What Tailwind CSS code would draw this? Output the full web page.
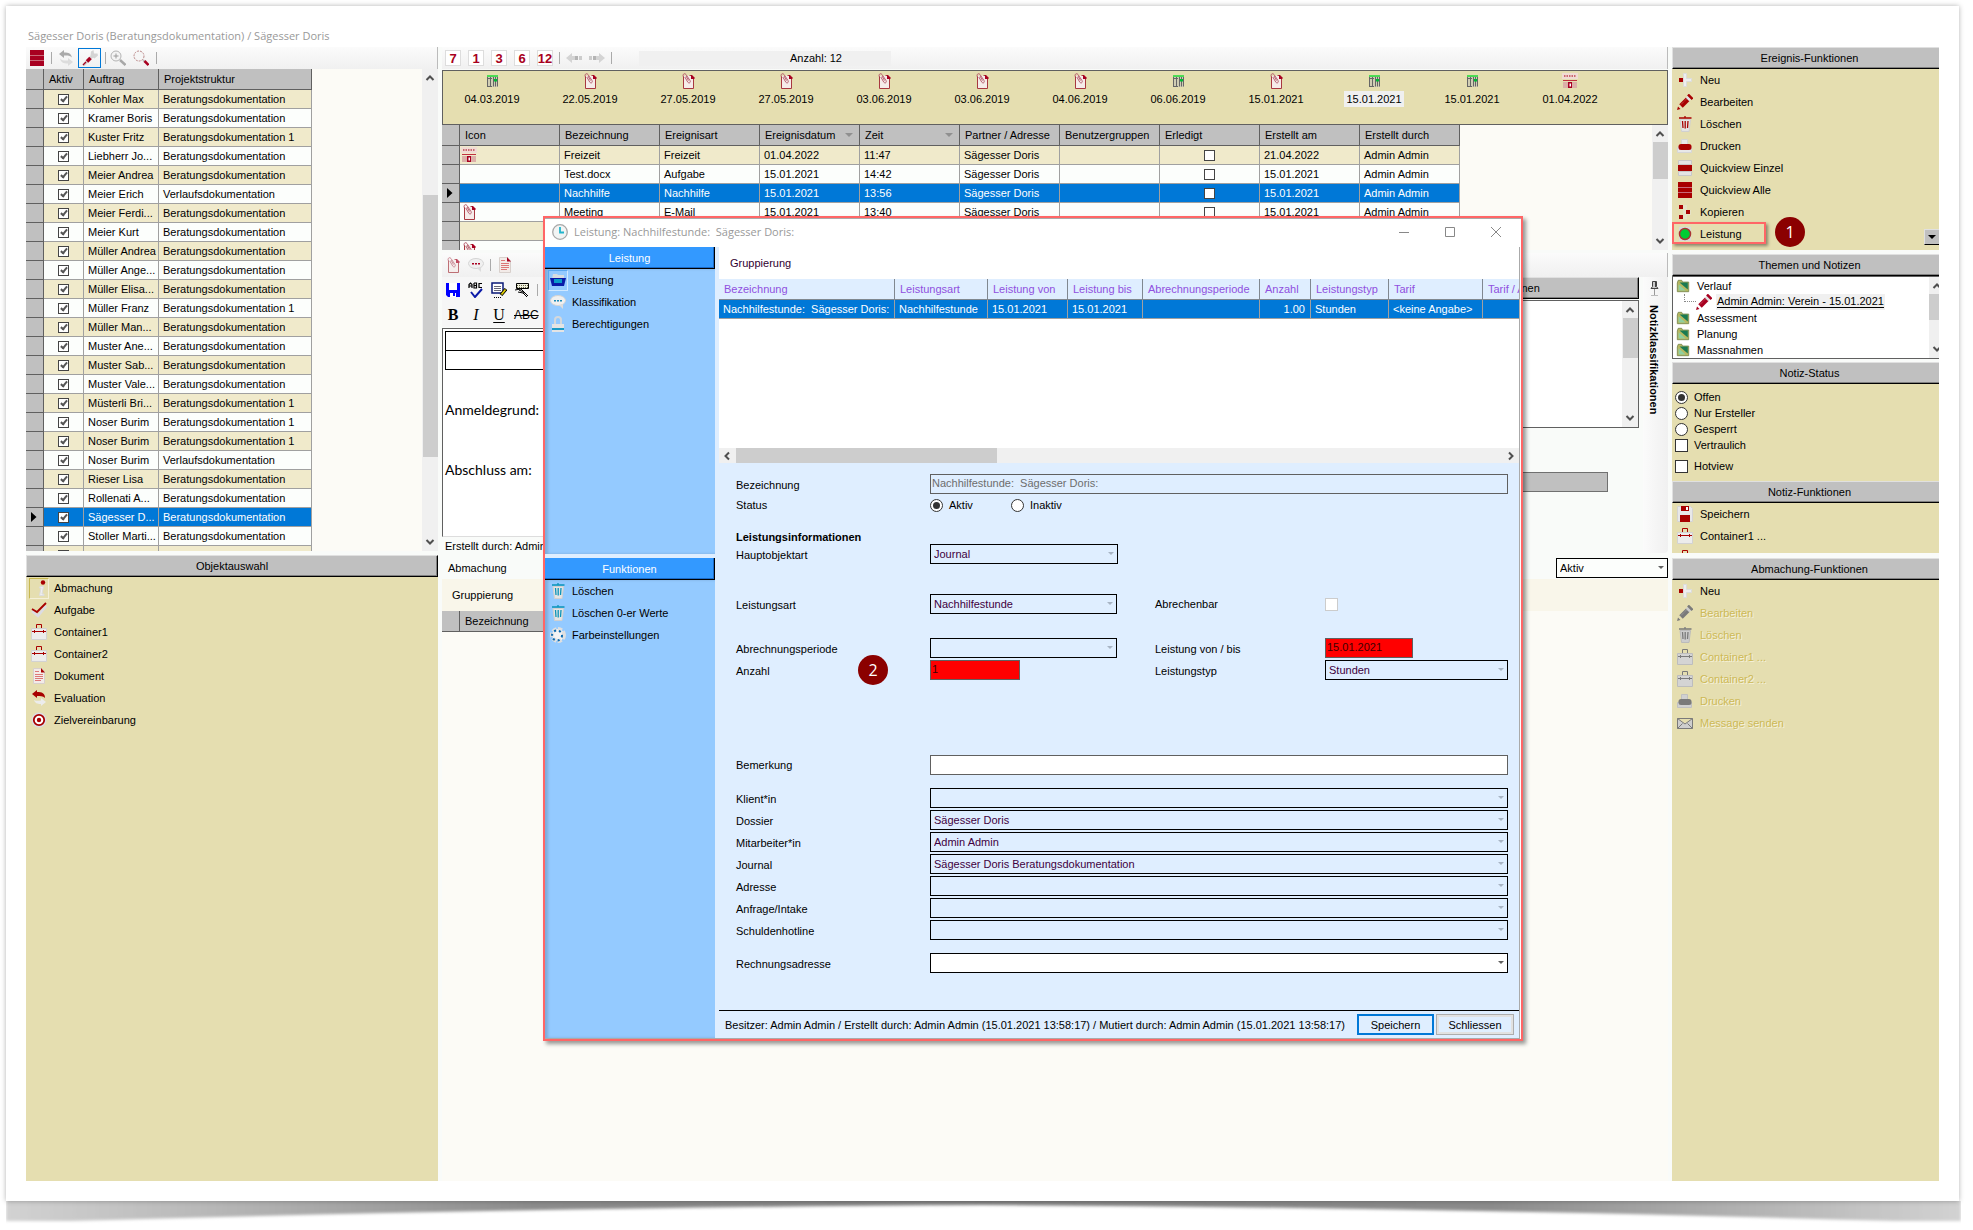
<!DOCTYPE html>
<html lang="de">
<head>
    <meta charset="UTF-8">
    <meta name="viewport" content="width=device-width, initial-scale=1.0">
    <title>Sägesser Doris (Beratungsdokumentation) / Sägesser Doris</title>
    <script src="https://cdn.jsdelivr.net/npm/@tailwindcss/browser@4"></script>
</head>
<body class="bg-white min-h-screen overflow-x-hidden font-['Liberation_Sans',Arial,sans-serif] text-[11px] leading-4 text-black">

    <!-- Icon set, the accent colour comes from currentColor -->
    <svg class="hidden" xmlns="http://www.w3.org/2000/svg">
        <symbol id="i-rows" viewBox="0 0 16 16"><path fill="currentColor" d="M1 0h14v5H1zM1 6h14v4H1zM1 11h14v5H1z"/><path stroke="#c96a78" d="M1 5.500h14M1 10.500h14"/></symbol>
        <symbol id="i-row" viewBox="0 0 16 16"><path fill="#e4e4e4" stroke="#c8c8c8" d="M1.500.5h13v4h-13zM1.500 11.500h13v4h-13z"/><path fill="currentColor" d="M1 5h14v6H1z"/></symbol>
        <symbol id="i-swap" viewBox="0 0 16 16"><path fill="currentColor" d="M1 4l5-4v2.500c5 0 7 1 8 5-2-2-4-2.200-8-2V8z"/><path fill="#dcdcdc" d="M15 12l-5 4v-2.500c-5 0-7-1-8-5 2 2 4 2.200 8 2V8z"/></symbol>
        <symbol id="i-wrench" viewBox="0 0 16 16"><path stroke="#d4d4d4" stroke-width="3" stroke-linecap="round" d="M2 14.500L10.500 6"/><path fill="#d4d4d4" d="M8.500 6L9 1.500l2.500-1.500.5 3.500 3.500 0 .5 2-3.500 3z"/><path stroke="currentColor" stroke-width="3.500" d="M5 11.500l3.500-3.500"/><path stroke="currentColor" stroke-width="1.200" d="M1 15l3-3"/></symbol>
        <symbol id="i-zoom" viewBox="0 0 16 16"><circle cx="6" cy="6" r="5" fill="#f4f4f4" stroke="#b4b4b4"/><path stroke="#9a9a9a" d="M6 3.500v5M3.500 6h5"/><path stroke="#a8a8a8" stroke-width="2.500" d="M10 10l5.500 5"/></symbol>
        <symbol id="i-zoomsel" viewBox="0 0 16 16"><circle cx="6" cy="6" r="5" fill="#f6f6f6" stroke="#b88" stroke-dasharray="2 1"/><path stroke="#bbb" stroke-width="2" d="M10 10l2 2"/><path stroke="currentColor" stroke-width="2.500" d="M11.500 11l4 4"/></symbol>
        <symbol id="i-info" viewBox="0 0 16 16"><circle cx="12" cy="2.500" r="2.200" fill="currentColor"/><path fill="#efefef" stroke="#ddd" d="M9 6.500h3.500L11 14h2v1.500H8.500L10 8H8.500z"/></symbol>
        <symbol id="i-check" viewBox="0 0 16 16"><path fill="none" stroke="#dcdce4" stroke-width="2.500" d="M1 9l6 5 8-10"/><path fill="none" stroke="currentColor" stroke-width="1.800" d="M1 7l5 3L15 1"/></symbol>
        <symbol id="i-box" viewBox="0 0 16 16"><path fill="#ececec" stroke="#d2d2d2" d="M.5 4.500h15v11H.5z"/><path fill="none" stroke="currentColor" d="M5.500 4V.5h5V4M1 7.500h14M3.500 6v3M12.500 6v3"/></symbol>
        <symbol id="i-doc" viewBox="0 0 16 16"><path fill="#f3ebe8" stroke="#d8d0cc" d="M2.500.5h8l3 3.500v11.500h-11z"/><path fill="currentColor" d="M10 0l4 4.500h-4z"/><path stroke="#d77" d="M4 3.500h4M4 6.500h8M4 8.500h8M4 10.500h8M4 12.500h6"/></symbol>
        <symbol id="i-eval" viewBox="0 0 16 16"><path fill="currentColor" d="M1 4l5-4v2c5 0 8 1 8 6-2-2-5-2-8-2v2z"/><path fill="#ececec" d="M15 12l-5 4v-2c-4 0-6-1-7-4 2 1 4 1 7 .5V8z"/></symbol>
        <symbol id="i-target" viewBox="0 0 16 16"><circle cx="8" cy="8" r="7.500" fill="#dcdce4"/><circle cx="8" cy="8" r="5.200" fill="#fff" stroke="currentColor" stroke-width="1.800"/><circle cx="8" cy="8" r="2.200" fill="currentColor"/></symbol>
        <symbol id="i-plus" viewBox="0 0 16 16"><path fill="#eee" stroke="#dcdcdc" d="M6.500 1.500h3v5h5v3h-5v5h-3z"/><path fill="currentColor" d="M2 6h4v4H2z"/></symbol>
        <symbol id="i-pencil" viewBox="0 0 16 16"><path stroke="currentColor" stroke-width="5" d="M4 12l7-7"/><path stroke="#e4e4e4" stroke-width="5" d="M10.500 5.500l2-2"/><path stroke="currentColor" stroke-width="2.500" d="M11 .5l4.500 4.500"/><path fill="currentColor" d="M0 16l1-3.500L3.500 15z"/><path stroke="#fff" stroke-opacity=".4" stroke-dasharray="1 1" d="M3 11.500L10 4.500"/></symbol>
        <symbol id="i-trash" viewBox="0 0 16 16"><path fill="#e4e4e4" stroke="#d0d0d0" d="M3 3.500h10.500l-1.500 12H4.500z"/><path stroke="currentColor" stroke-width="1.300" d="M2 2h12.500M8 0v2M5.500 5l.5 7M8.200 5v7.500M11 5l-.5 7"/></symbol>
        <symbol id="i-print" viewBox="0 0 16 16"><path fill="#e8e8e8" stroke="#d6d6d6" d="M4.500 1.500h6v5h-6zM.5 9.500h14v5H.5z"/><rect x="1.500" y="6" width="13" height="6" rx="2.500" fill="currentColor"/></symbol>
        <symbol id="i-copy" viewBox="0 0 16 16"><path fill="#e8e8e8" d="M6 1h4v5h4v5h-4v4H6z" opacity=".4"/><path fill="currentColor" d="M2 1h4v4H2zM9 6h4v4H9zM2 11h4v4H2z"/></symbol>
        <symbol id="i-led" viewBox="0 0 16 16"><path fill="#d9d9d9" d="M2 1h12v14H2z"/><circle cx="8" cy="8" r="5.500" fill="#0c3" stroke="#a33" stroke-width="1.500"/></symbol>
        <symbol id="i-disk" viewBox="0 0 16 16"><path fill="#e8e8e8" stroke="#d4d4d4" d="M.5.5h13l2 2v13H.5z"/><path fill="currentColor" d="M3 9h10v7H3zM4 0h8v5H4z"/><path fill="#fff" d="M9 1h2v3H9z"/></symbol>
        <symbol id="i-mail" viewBox="0 0 16 16"><path fill="#e4e4ea" stroke="currentColor" d="M.5 3.500h15v10H.5zM.5 3.500L8 9l7.500-5.500M.5 13.500l5-5M15.500 13.500l-5-5"/></symbol>
        <symbol id="i-folder" viewBox="0 0 16 16"><path fill="#b8b860" stroke="#7a8a50" d="M1.500 4.500L2.500 1.500h4l1 2h7v11h-13z"/><path fill="#1a7a52" d="M4 4h9.500v8z"/><path fill="#8fd0a0" d="M3 6l8 7H3z"/></symbol>
        <symbol id="i-clip" viewBox="0 0 16 16"><path fill="#f6ecea" stroke="#a83840" d="M3.500 3v12.500h10v-11l-2-2h-2"/><path fill="none" stroke="#b86070" d="M3.500 4C2 1.500 4.500-.5 6 1.500l4 6c1 2-1 3.500-2.300 1.500L4.800 4M6 3l2.500 4.500"/><path fill="currentColor" d="M11 2h1l2.500 2.500V6H11z"/></symbol>
        <symbol id="i-cal" viewBox="0 0 16 16"><path fill="#d0cdb4" d="M3 3h11v11H3z"/><path stroke="#666" d="M3.500 4v9.500M6.500 4v9.500M9.500 4v9.500M11.500 4v9.500M13.500 4v9.500"/><path stroke="#666" d="M3 5.500h5M3 13.500h5"/><path stroke="#0d2" stroke-width="1.300" d="M3 3h11"/><path fill="#0b3" d="M10 6h3v2.500h-3z"/></symbol>
        <symbol id="i-news" viewBox="0 0 16 16"><path fill="#f0dcd4" d="M0 0h16v6H0z"/><path stroke="#c04050" stroke-width="1.500" stroke-dasharray="1.500 1" d="M2 3h12"/><path stroke="#c03040" d="M1 7.500h14"/><path fill="#dcb0a8" d="M1 9h14v6H1z"/><path fill="currentColor" d="M6 9h4v6H6z"/><path fill="#fff" d="M7.500 10.500h1.500v3H7.500z"/></symbol>
        <symbol id="i-clock" viewBox="0 0 16 16"><circle cx="8" cy="8" r="7.300" fill="#f2f4f4" stroke="#a8a8a8" stroke-width="1.300"/><path fill="none" stroke="#22b4cc" stroke-width="1.800" d="M8 3v5.500h4"/></symbol>
        <symbol id="i-chat" viewBox="0 0 16 16"><ellipse cx="8" cy="6.500" rx="7.500" ry="5" fill="#f0f0f0" stroke="#d4d4d4"/><path fill="#dcdcdc" d="M9 11l4 4v-5z"/><path fill="currentColor" d="M4 6h2v1.500H4zM7 6h2v1.500H7zM10 6h2v1.500h-2z"/></symbol>
        <symbol id="i-tray" viewBox="0 0 16 16"><path fill="#d8dce0" d="M3 2h4l1 1h6v4H2z"/><path fill="#0a1aa8" d="M0 6h16l-2 8H2z"/><path fill="#0a9ac8" d="M4 7h8v4H4z"/></symbol>
        <symbol id="i-lock" viewBox="0 0 16 16"><path fill="none" stroke="#d4d8dc" stroke-width="2" d="M5 8V4a3 3 0 016 0v4"/><path fill="#e4e4e4" d="M2 8h12v8H2z"/><path fill="#1a9ac4" d="M2 12h12v2H2z"/></symbol>
        <symbol id="i-gear" viewBox="0 0 16 16"><circle cx="8" cy="8" r="6" fill="#f4f4f4" stroke="#e0e0e0" stroke-width="4" stroke-dasharray="4 1.500"/><circle cx="7" cy="8.500" r="5" fill="none" stroke="#0a6ab0" stroke-width="2" stroke-dasharray="2 3"/></symbol>
        <symbol id="i-save" viewBox="0 0 16 16"><path fill="#00f" d="M1 1h14v14H3l-2-2z"/><path fill="#fff" d="M4 1h8v7H4zM5 11h6v4H5z"/><path fill="#00f" d="M8 11h2v3H8z"/></symbol>
        <symbol id="i-spell" viewBox="0 0 16 16"><path fill="none" stroke="#000" stroke-width="1.200" d="M1 6V2.500L2.500 1 4 2.500V6M1 4h3M6 1v5h2.500V1H6M6 3.500h2.500M14 1.500h-3v4h3"/><path fill="none" stroke="#0a1aa8" stroke-width="2" d="M3 10l4 5 7-8"/></symbol>
        <symbol id="i-form" viewBox="0 0 16 16"><path fill="#fff" stroke="#0a1a78" stroke-width="1.500" d="M1 1h11v10H1z"/><path stroke="#667" d="M3 4.500h7M3 6.500h7M3 8.500h7"/><path stroke="#000" stroke-width="3.500" d="M10 13l5-6"/><path stroke="#dc0" stroke-width="1.800" d="M10.500 12.500l4-5"/><path stroke="#000" stroke-dasharray="1 1" d="M3 15.500h7"/></symbol>
        <symbol id="i-format" viewBox="0 0 16 16"><path fill="#eed" stroke="#000" d="M2.500 1.500h12v5h-12z"/><path stroke="#664" stroke-dasharray="1 1" d="M3 3.500h11M3 5.500h11"/><path fill="#fff" stroke="#000" d="M1 8l6-1 7 7M4 10l5 1 4 4M5 8l6 3"/></symbol>
        <symbol id="i-pin" viewBox="0 0 16 16"><path fill="#ccc" stroke="#444" d="M6.500.5h4v5l1.500 2H5l1.500-2zM9.500 1v5"/><path stroke="#999" d="M8.500 8v6"/><path stroke="#bbb" d="M5 14.500h7"/></symbol>
        <symbol id="i-left" viewBox="0 0 16 16"><path fill="#d4d4d4" d="M0 8l6-5v3h3v4H6v3z"/><path fill="#b4b4b4" d="M9 6h3v4H9z"/><path fill="#ccc" d="M13 6h3v4h-3z"/></symbol>
        <symbol id="i-right" viewBox="0 0 16 16"><path fill="#d4d4d4" d="M16 8l-6-5v3H7v4h3v3z"/><path fill="#b4b4b4" d="M4 6h3v4H4z"/><path fill="#ccc" d="M0 6h3v4H0z"/></symbol>
        <symbol id="i-up" viewBox="0 0 10 10"><path fill="none" stroke="#505050" stroke-width="2" d="M1.500 7L5 3.500 8.500 7"/></symbol>
        <symbol id="i-down" viewBox="0 0 10 10"><path fill="none" stroke="#505050" stroke-width="2" d="M1.500 3L5 6.500 8.500 3"/></symbol>
        <symbol id="i-prev" viewBox="0 0 10 10"><path fill="none" stroke="#505050" stroke-width="2" d="M7 1.500L3.500 5 7 8.500"/></symbol>
        <symbol id="i-next" viewBox="0 0 10 10"><path fill="none" stroke="#505050" stroke-width="2" d="M3 1.500L6.500 5 3 8.500"/></symbol>
        <symbol id="i-tri" viewBox="0 0 8 4"><path fill="currentColor" d="M0 0h8L4 4z"/></symbol>
        <symbol id="i-marker" viewBox="0 0 6 10"><path d="M0 0l5.500 5L0 10z"/></symbol>
    </svg>

    <div class="relative flex flex-col mt-[6px] ml-[6px] mr-[14px] min-h-[calc(100vh-35px)] p-5 bg-white shadow-[0_0_5px_rgba(0,0,0,0.3)]">

        <h1 class="h-[21px] leading-[19px] pl-[2px] font-['Open_Sans','Noto_Sans',sans-serif] text-[11px] text-[#999]">Sägesser Doris (Beratungsdokumentation) / Sägesser Doris</h1>

        <main class="flex-1 grid grid-cols-[412px_minmax(0,1fr)_267px] gap-1 bg-[#f9fbf9]">

            <!-- Left column: Aufträge + Objektauswahl -->
            <section class="flex flex-col">
                <div class="h-[22px] flex items-center bg-linear-to-b from-[#fbfbfb] to-[#f0f0f0] border-r border-[#bbb] pl-[3px] text-[#a80020]">
                    <button type="button" aria-label="Quickview"><svg class="size-4"><use href="#i-rows"/></svg></button>
                    <span class="w-px h-3 bg-[#aaa] ml-1.5 mr-1.5"></span>
                    <button type="button" aria-label="Aktualisieren" class="text-[#aaa]"><svg class="size-4"><use href="#i-swap"/></svg></button>
                    <button type="button" aria-label="Einstellungen" class="w-[23px] h-5 ml-1 flex items-center justify-center border border-[#0078d7]"><svg class="size-4"><use href="#i-wrench"/></svg></button>
                    <span class="w-px h-3 bg-[#aaa] ml-1 mr-1"></span>
                    <button type="button" aria-label="Zoom"><svg class="size-4"><use href="#i-zoom"/></svg></button>
                    <button type="button" aria-label="Auswahl zoomen" class="ml-[7px]"><svg class="size-4"><use href="#i-zoomsel"/></svg></button>
                    <span class="w-px h-3 bg-[#aaa] ml-[7px]"></span>
                </div>
                <div class="h-[482px] flex bg-[#fcfbf6]">
                    <div class="flex-1 overflow-hidden">
                        <table class="table-fixed w-[286px] border-separate border-spacing-0">
                            <colgroup><col class="w-[18px]"><col class="w-[40px]"><col class="w-[75px]"><col class="w-[153px]"></colgroup>
                            <thead>
                                <tr class="h-[21px] bg-[#c0c0c0] text-left">
                                    <th class="p-0 border-r border-b border-[#606060]"></th>
                                    <th class="p-0 pl-[5px] font-normal border-r border-b border-[#606060]">Aktiv</th>
                                    <th class="p-0 pl-[5px] font-normal border-r border-b border-[#606060]">Auftrag</th>
                                    <th class="p-0 pl-[5px] font-normal border-r border-b border-[#606060]">Projektstruktur</th>
                                </tr>
                            </thead>
                            <tbody id="auftragRows"></tbody>
                        </table>
                    </div>
                    <div class="w-4 flex flex-col items-center bg-[#f0f0f0]">
                        <svg class="size-2.5 mt-1"><use href="#i-up"/></svg>
                        <div class="w-[15px] h-[262px] mt-28 bg-[#cdcdcd]"></div>
                        <svg class="size-2.5 mt-auto mb-1"><use href="#i-down"/></svg>
                    </div>
                </div>
                <h2 class="mt-1 h-[22px] leading-[20px] text-center bg-[#c0c0c0] border-t border-l border-[#e0e0e0] border-r border-b border-r-black border-b-black shadow-[inset_-1px_-1px_0_#808080]">Objektauswahl</h2>
                <ul id="objektListe" class="flex-1 bg-[#e5deb0] text-[#a80000]"></ul>
            </section>

            <!-- Centre column: Ereignisse, Editor, Abmachung -->
            <section class="flex flex-col min-w-0">
                <div class="h-[22px] flex items-center bg-linear-to-b from-[#fbfbfb] to-[#f0f0f0] border-r border-[#bbb] pl-[3px]">
                    <div id="rangeButtons" class="flex gap-[7px]"></div>
                    <span class="w-px h-3 bg-[#aaa] mx-1.5"></span>
                    <button type="button" aria-label="Zurück"><svg class="size-4"><use href="#i-left"/></svg></button>
                    <button type="button" aria-label="Vor" class="ml-[7px]"><svg class="size-4"><use href="#i-right"/></svg></button>
                    <span class="w-px h-3 bg-[#aaa] ml-1.5"></span>
                    <span class="w-[252px] h-[15px] leading-[15px] ml-[27px] pl-[151px] bg-[#f0f0f0]">Anzahl: 12</span>
                </div>
                <ul id="zeitstrahl" class="h-[55px] mt-px flex bg-[#e5deb0] border border-[#606060] pt-0.5"></ul>
                <div class="h-[125px] flex bg-[#fcfbf6]">
                    <div class="flex-1 overflow-hidden">
                        <table class="table-fixed w-[1018px] border-separate border-spacing-0">
                            <colgroup><col class="w-[18px]"><col span="10" class="w-[100px]"></colgroup>
                            <thead><tr id="ereignisHead" class="h-[21px] bg-[#c0c0c0] text-left"></tr></thead>
                            <tbody id="ereignisRows"></tbody>
                        </table>
                    </div>
                    <div class="w-4 flex flex-col items-center bg-[#f0f0f0]">
                        <svg class="size-2.5 mt-1"><use href="#i-up"/></svg>
                        <div class="w-[15px] h-[37px] mt-[3px] bg-[#cdcdcd]"></div>
                        <svg class="size-2.5 mt-auto mb-1"><use href="#i-down"/></svg>
                    </div>
                </div>

                <div class="h-6 mt-[3px] flex items-center bg-linear-to-b from-[#fbfbfb] to-[#f0f0f0] border-r border-[#bbb] pl-[3px] text-[#a80020]">
                    <button type="button" aria-label="Anhang"><svg class="size-4 opacity-70"><use href="#i-clip"/></svg></button>
                    <button type="button" aria-label="Kommentar" class="ml-[7px]"><svg class="size-4"><use href="#i-chat"/></svg></button>
                    <span class="w-px h-3 bg-[#aaa] mx-1.5"></span>
                    <button type="button" aria-label="Dokument"><svg class="size-4"><use href="#i-doc"/></svg></button>
                </div>
                <div class="flex h-[276px]">
                    <div class="flex-1 flex flex-col min-w-0">
                        <div class="h-[25px] flex items-center gap-[7px] bg-[#f6f6f6] pl-[3px]">
                            <button type="button" aria-label="Speichern"><svg class="size-4"><use href="#i-save"/></svg></button>
                            <button type="button" aria-label="Rechtschreibung"><svg class="size-4"><use href="#i-spell"/></svg></button>
                            <button type="button" aria-label="Formular"><svg class="size-4"><use href="#i-form"/></svg></button>
                            <button type="button" aria-label="Format"><svg class="size-4"><use href="#i-format"/></svg></button>
                            <span class="w-px h-3 bg-[#aaa]"></span>
                        </div>
                        <div class="h-[25px] flex items-center gap-[7px] bg-[#f6f6f6] pl-[3px] font-['Liberation_Serif',serif] text-[16px]">
                            <button type="button" class="w-4 font-bold">B</button>
                            <button type="button" class="w-4 italic">I</button>
                            <button type="button" class="w-4 underline underline-offset-2">U</button>
                            <button type="button" class="w-6 line-through font-['Liberation_Sans',sans-serif] text-[12px]">ABC</button>
                        </div>
                        <div class="flex-1 mt-px bg-white border-l border-t border-[#606060] border-b border-b-[#ddd] p-0.5 font-['Lato',sans-serif] text-[14px] leading-5">
                            <div class="border border-black"><div class="h-[19px] border-b border-black"></div><div class="h-[18px]"></div></div>
                            <p class="mt-[30px]">Anmeldegrund:</p>
                            <p class="mt-10">Abschluss am:</p>
                        </div>
                        <p class="h-4 leading-[18px] pl-[3px]">Erstellt durch: Admin Admin</p>
                    </div>
                    <div class="w-[298px] flex flex-col">
                        <h2 class="h-[22px] leading-[20px] text-center bg-[#c0c0c0] border-t border-l border-[#e0e0e0] border-r border-b border-r-black border-b-black shadow-[inset_-1px_-1px_0_#808080]">Notizklassifikationen</h2>
                        <div class="h-[128px] mt-px flex justify-end bg-white border border-[#606060]">
                            <div class="w-4 flex flex-col items-center bg-[#f0f0f0]">
                                <svg class="size-2.5 mt-1"><use href="#i-up"/></svg>
                                <div class="w-[15px] h-10 mt-[3px] bg-[#cdcdcd]"></div>
                                <svg class="size-2.5 mt-auto mb-1"><use href="#i-down"/></svg>
                            </div>
                        </div>
                        <div class="h-5 mt-11 mr-[31px] bg-[#c0c0c0] border border-[#707070]"></div>
                    </div>
                    <div class="w-[25px] ml-1 flex flex-col items-start bg-linear-to-r from-[#fbfbfb] to-[#f0f0f0] rounded-b pl-[3px] pt-1">
                        <svg class="size-4"><use href="#i-pin"/></svg>
                        <span class="mt-2 font-bold leading-[16px] [writing-mode:vertical-rl]">Notizklassifikationen</span>
                    </div>
                </div>
                <div class="h-[21px] mt-[5px] flex justify-between pl-1.5">
                    <label for="abmStatus" class="leading-[21px]">Abmachung</label>
                    <div class="relative w-[112px]">
                        <select id="abmStatus" class="appearance-none w-full h-5 pl-[3px] bg-[#fcfefc] border border-black"><option>Aktiv</option></select>
                        <svg class="absolute right-1 top-2 w-1.5 h-[3px] text-[#606060]"><use href="#i-tri"/></svg>
                    </div>
                </div>
                <div class="h-8 leading-8 pl-[10px] bg-[#f9f6ea]">Gruppierung</div>
                <div class="flex-1 bg-[#fcfbf6]">
                    <table class="table-fixed w-[300px] border-separate border-spacing-0">
                        <colgroup><col class="w-[18px]"><col></colgroup>
                        <tr class="h-[21px] bg-[#c0c0c0] text-left"><th class="p-0 border-r border-b border-[#606060]"></th><th class="p-0 pl-[5px] font-normal border-r border-b border-[#606060]">Bezeichnung</th></tr>
                    </table>
                </div>
            </section>

            <!-- Right column: Funktionen -->
            <aside class="overflow-hidden">
                <div class="w-[274px] h-full flex flex-col">
                    <h2 class="h-[22px] leading-[20px] text-center bg-[#c0c0c0] border-t border-l border-[#e0e0e0] border-b border-b-black shadow-[inset_0_-1px_0_#808080]">Ereignis-Funktionen</h2>
                    <div class="relative h-[181px] bg-[#e5deb0] text-[#a80000]">
                        <ul id="ereignisFunktionen"></ul>
                        <span class="absolute left-0 top-[153px] w-[94px] h-[22px] border-2 border-[#ff6666] shadow-[2px_2px_3px_rgba(0,0,0,0.4)]"></span>
                        <span class="absolute left-[103px] top-[148px] size-[30px] leading-[30px] rounded-full bg-[#8b0000] text-white text-center text-[16px] font-['Open_Sans',sans-serif]">1</span>
                        <button type="button" aria-label="Mehr" class="absolute left-[252px] top-[160px] size-4 flex items-center justify-center bg-[#c0c0c0] border border-[#e0e0e0] border-r-black border-b-black text-black"><svg class="w-2 h-1"><use href="#i-tri"/></svg></button>
                    </div>
                    <h2 class="mt-1 h-[22px] leading-[20px] text-center bg-[#c0c0c0] border-t border-l border-[#e0e0e0] border-b border-b-black shadow-[inset_0_-1px_0_#808080]">Themen und Notizen</h2>
                    <div class="h-[83px] flex bg-white border border-[#606060]">
                        <ul class="flex-1 overflow-hidden pl-[3px] pt-px">
                            <li class="h-4 flex items-center gap-[7px]"><svg class="size-3.5"><use href="#i-folder"/></svg>Verlauf</li>
                            <li class="h-4 flex items-center"><span class="w-3 h-2 -mt-2 ml-2 border-l border-b border-dotted border-[#888]"></span><svg class="size-4 mr-1 text-[#a80020]"><use href="#i-pencil"/></svg><a href="#" class="h-4 leading-[15px] px-px bg-[#f0f0f0] underline underline-offset-2">Admin Admin: Verein - 15.01.2021</a></li>
                            <li class="h-4 flex items-center gap-[7px]"><svg class="size-3.5"><use href="#i-folder"/></svg>Assessment</li>
                            <li class="h-4 flex items-center gap-[7px]"><svg class="size-3.5"><use href="#i-folder"/></svg>Planung</li>
                            <li class="h-4 flex items-center gap-[7px]"><svg class="size-3.5"><use href="#i-folder"/></svg>Massnahmen</li>
                        </ul>
                        <div class="w-4 flex flex-col items-center bg-[#f0f0f0]">
                            <svg class="size-2.5 mt-1"><use href="#i-up"/></svg>
                            <div class="w-4 h-[26px] mt-[3px] bg-[#cdcdcd]"></div>
                            <svg class="size-2.5 mt-auto mb-1"><use href="#i-down"/></svg>
                        </div>
                    </div>
                    <h2 class="mt-[3px] h-[22px] leading-[20px] text-center bg-[#c0c0c0] border-t border-l border-[#e0e0e0] border-b border-b-black shadow-[inset_0_-1px_0_#808080]">Notiz-Status</h2>
                    <div class="h-[97px] bg-[#e5deb0] pt-[5px] pl-[3px]">
                        <label class="h-4 flex items-center gap-1.5"><input type="radio" name="notiz" checked class="appearance-none size-[13px] rounded-full border border-[#333] bg-white p-0.5 checked:after:block checked:after:size-[7px] checked:after:rounded-full checked:after:bg-[#333] checked:after:content-['']">Offen</label>
                        <label class="h-4 flex items-center gap-1.5"><input type="radio" name="notiz" class="appearance-none size-[13px] rounded-full border border-[#333] bg-white">Nur Ersteller</label>
                        <label class="h-4 flex items-center gap-1.5"><input type="radio" name="notiz" class="appearance-none size-[13px] rounded-full border border-[#333] bg-white">Gesperrt</label>
                        <label class="h-4 flex items-center gap-1.5"><input type="checkbox" class="appearance-none size-[13px] border border-[#333] bg-white">Vertraulich</label>
                        <label class="h-4 mt-[5px] flex items-center gap-1.5"><input type="checkbox" class="appearance-none size-[13px] border border-[#333] bg-white">Hotview</label>
                    </div>
                    <h2 class="h-[22px] leading-[20px] text-center bg-[#c0c0c0] border-t border-l border-[#e0e0e0] border-b border-b-black shadow-[inset_0_-1px_0_#808080]">Notiz-Funktionen</h2>
                    <ul id="notizFunktionen" class="h-[50px] overflow-hidden bg-[#e5deb0] text-[#a80000]"></ul>
                    <h2 class="mt-[5px] h-[22px] leading-[20px] text-center bg-[#c0c0c0] border-t border-l border-[#e0e0e0] border-b border-b-black shadow-[inset_0_-1px_0_#808080]">Abmachung-Funktionen</h2>
                    <ul id="abmachungFunktionen" class="flex-1 bg-[#e5deb0] text-[#a80000]"></ul>
                </div>
            </aside>
        </main>

        <!-- Dialog: Leistung -->
        <div role="dialog" aria-label="Leistung" class="absolute left-[537px] right-[436px] top-[210px] h-[825px] flex flex-col bg-white border-2 border-[#ff6666] shadow-[3px_3px_4px_rgba(0,0,0,0.4)]">
            <div class="h-[29px] flex items-center pl-[7px] pr-0.5 pb-0.5 border-t border-[#aaa]">
                <svg class="size-4"><use href="#i-clock"/></svg>
                <span class="ml-1.5 flex-1 whitespace-pre font-['Open_Sans','Noto_Sans',sans-serif] text-[11px] text-[#999]">Leistung: Nachhilfestunde:  Sägesser Doris:</span>
                <button type="button" aria-label="Minimieren" class="w-[46px] flex justify-center"><svg class="size-3" viewBox="0 0 12 12"><path stroke="#888" d="M1 6.500h10"/></svg></button>
                <button type="button" aria-label="Maximieren" class="w-[46px] flex justify-center"><svg class="size-3" viewBox="0 0 12 12"><path fill="none" stroke="#888" d="M1.500 1.500h9v9h-9z"/></svg></button>
                <button type="button" aria-label="Fenster schliessen" class="w-[46px] flex justify-center"><svg class="size-3" viewBox="0 0 12 12"><path stroke="#888" d="M1 1l10 10M11 1L1 11"/></svg></button>
            </div>
            <div class="flex-1 flex mr-px bg-[#dfeeff] border-r border-b border-[#aaa]">
                <nav class="w-[170px] mr-1 flex flex-col">
                    <h2 class="h-[22px] leading-[22px] text-center text-white bg-[#3399ff] border-r border-b border-black shadow-[inset_-1px_-1px_0_#1a6ac8]">Leistung</h2>
                    <ul id="dialogNav" class="h-[285px] bg-[#94caff] text-[#1a8ab8] shadow-[inset_3px_0_3px_rgba(0,0,0,0.15)]"></ul>
                    <h2 class="mt-1 h-[22px] leading-[22px] text-center text-white bg-[#3399ff] border-r border-b border-black shadow-[inset_-1px_-1px_0_#1a6ac8]">Funktionen</h2>
                    <ul id="dialogFunktionen" class="flex-1 bg-[#94caff] text-[#0a94b8] shadow-[inset_3px_0_3px_rgba(0,0,0,0.15)]"></ul>
                </nav>
                <div class="flex-1 min-w-0 flex flex-col">
                    <div class="h-8 leading-8 pl-[11px] bg-white text-[#300030]">Gruppierung</div>
                    <div class="h-[169px] overflow-hidden bg-white">
                        <table class="table-fixed w-[860px] border-separate border-spacing-0 whitespace-pre">
                            <colgroup><col class="w-[176px]"><col class="w-[93px]"><col class="w-[80px]"><col class="w-[75px]"><col class="w-[117px]"><col class="w-[51px]"><col class="w-[78px]"><col class="w-[94px]"><col></colgroup>
                            <thead><tr id="leistungHead" class="h-[21px] bg-[#dfeeff] text-left text-[#9050e0]"></tr></thead>
                            <tbody><tr id="leistungRow" class="h-[19px] bg-[#0078d7] text-white"></tr></tbody>
                        </table>
                    </div>
                    <div class="h-[15px] flex items-center bg-[#f0f0f0] px-[3px]">
                        <svg class="size-2.5"><use href="#i-prev"/></svg>
                        <div class="w-[261px] h-[15px] ml-1 bg-[#cdcdcd]"></div>
                        <svg class="size-2.5 ml-auto"><use href="#i-next"/></svg>
                    </div>
                    <form id="leistungForm" class="flex-1 flex flex-col pl-[17px] pr-[11px] pt-[11px]">
                        <div class="flex items-center">
                            <label for="bez" class="w-[194px] pt-0.5">Bezeichnung</label>
                            <input id="bez" type="text" readonly value="Nachhilfestunde:  Sägesser Doris:" class="flex-1 h-5 pl-px pb-0.5 border border-[#606060] text-[#6d6d6d]">
                        </div>
                        <div class="h-[22px] flex items-center">
                            <span class="w-[194px]">Status</span>
                            <label class="w-[81px] flex items-center gap-1.5"><input type="radio" name="status" checked class="appearance-none size-[13px] rounded-full border border-[#333] bg-white p-0.5 checked:after:block checked:after:size-[7px] checked:after:rounded-full checked:after:bg-[#333] checked:after:content-['']">Aktiv</label>
                            <label class="flex items-center gap-1.5"><input type="radio" name="status" class="appearance-none size-[13px] rounded-full border border-[#333] bg-white">Inaktiv</label>
                        </div>
                        <h3 class="mt-[13px] h-[15px] font-bold">Leistungsinformationen</h3>
                        <div class="flex items-center">
                            <label for="haupt" class="w-[194px] pt-0.5">Hauptobjektart</label>
                            <div class="relative w-[188px]">
                                <select id="haupt" class="appearance-none block w-full h-5 pl-[3px] border border-black text-[#400040]"><option>Journal</option></select>
                                <svg class="absolute right-1 top-2 w-1.5 h-[3px] text-[#a8b4c4]"><use href="#i-tri"/></svg>
                            </div>
                        </div>
                        <div class="mt-[30px] flex items-center">
                            <label for="art" class="w-[194px] pt-0.5">Leistungsart</label>
                            <div class="relative w-[187px] mr-[38px]">
                                <select id="art" class="appearance-none block w-full h-5 pl-[3px] border border-black text-[#400040]"><option>Nachhilfestunde</option></select>
                                <svg class="absolute right-1 top-2 w-1.5 h-[3px] text-[#a8b4c4]"><use href="#i-tri"/></svg>
                            </div>
                            <label for="abr" class="w-[170px]">Abrechenbar</label>
                            <input id="abr" type="checkbox" class="appearance-none size-[13px] border border-[#ccc] bg-white">
                        </div>
                        <div class="mt-6 flex items-center">
                            <label for="periode" class="w-[194px] pt-0.5">Abrechnungsperiode</label>
                            <div class="relative w-[187px] mr-[38px]">
                                <select id="periode" class="appearance-none block w-full h-5 pl-[3px] border border-black text-[#400040]"><option></option></select>
                                <svg class="absolute right-1 top-2 w-1.5 h-[3px] text-[#a8b4c4]"><use href="#i-tri"/></svg>
                            </div>
                            <label for="von" class="w-[170px] pt-0.5">Leistung von / bis</label>
                            <input id="von" type="text" value="15.01.2021" class="w-[88px] h-5 pl-px pb-0.5 bg-[#ff0000] border border-[#606060] text-[#400000]">
                        </div>
                        <div class="relative mt-0.5 flex items-center">
                            <label for="anzahl" class="w-[194px] pt-0.5">Anzahl</label>
                            <span class="absolute left-[122px] -top-[5px] size-[30px] leading-[30px] rounded-full bg-[#8b0000] text-white text-center text-[16px] font-['Open_Sans',sans-serif]">2</span>
                            <input id="anzahl" type="text" value="1" class="w-[90px] mr-[135px] h-5 pl-px pb-0.5 bg-[#ff0000] border border-[#606060] text-[#400000]">
                            <label for="typ" class="w-[170px] pt-0.5">Leistungstyp</label>
                            <div class="relative flex-1">
                                <select id="typ" class="appearance-none block w-full h-5 pl-[3px] border border-black text-[#400040]"><option>Stunden</option></select>
                                <svg class="absolute right-1 top-2 w-1.5 h-[3px] text-[#a8b4c4]"><use href="#i-tri"/></svg>
                            </div>
                        </div>
                        <div class="mt-[75px] mb-[11px] flex items-center">
                            <label for="bemerkung" class="w-[194px]">Bemerkung</label>
                            <input id="bemerkung" type="text" class="flex-1 h-5 bg-white border border-[#606060]">
                        </div>
                        <div id="bezuege"></div>
                        <div class="mt-[13px] flex items-center">
                            <label for="rechnung" class="w-[194px] pt-0.5">Rechnungsadresse</label>
                            <div class="relative flex-1">
                                <select id="rechnung" class="appearance-none block w-full h-5 pl-[3px] bg-white border border-black"><option></option></select>
                                <svg class="absolute right-1 top-2 w-1.5 h-[3px] text-[#606060]"><use href="#i-tri"/></svg>
                            </div>
                        </div>
                    </form>
                    <footer class="h-7 flex items-center border-t border-black pl-1.5 pr-[5px]">
                        <span class="flex-1">Besitzer: Admin Admin / Erstellt durch: Admin Admin (15.01.2021 13:58:17) / Mutiert durch: Admin Admin (15.01.2021 13:58:17)</span>
                        <button type="submit" form="leistungForm" class="w-[77px] h-[21px] leading-4 border-2 border-[#0078d7]">Speichern</button>
                        <button type="button" class="w-[78px] h-[21px] ml-0.5 border border-[#adadad] shadow-[inset_0_0_0_2px_#e1e1e1]">Schliessen</button>
                    </footer>
                </div>
            </div>
        </div>
    </div>

    <!-- curled paper shadow below the sheet -->
    <svg class="block ml-[6px] w-[calc(100%-18px)] h-[29px]" viewBox="0 0 1955 29" preserveAspectRatio="none">
        <defs>
            <linearGradient id="curl"><stop offset="0" stop-color="#d2d2d2"/><stop offset=".27" stop-color="#8c8c8c"/><stop offset=".5" stop-color="#808080"/><stop offset=".76" stop-color="#8c8c8c"/><stop offset="1" stop-color="#d2d2d2"/></linearGradient>
            <filter id="soft" x="-1%" y="-20%" width="102%" height="150%"><feGaussianBlur stdDeviation="1.500"/></filter>
        </defs>
        <path fill="url(#curl)" filter="url(#soft)" d="M0-4H1955V20H1890Q1400 6 977 4Q560 6 65 20H0z"/>
    </svg>

    <script>
        const icon = (name, cls = 'size-4') => `<svg class="${cls}"><use href="#i-${name}"/></svg>`;
        const fill = (id, html) => { document.getElementById(id).innerHTML = html; };

        // Aufträge
        const B = 'Beratungsdokumentation';
        const V = 'Verlaufsdokumentation';
        const auftraege = [
            ['Kohler Max', B], ['Kramer Boris', B], ['Kuster Fritz', B + ' 1'], ['Liebherr Jo...', B],
            ['Meier Andrea', B], ['Meier Erich', V], ['Meier Ferdi...', B], ['Meier Kurt', B],
            ['Müller Andrea', B], ['Müller Ange...', B], ['Müller Elisa...', B], ['Müller Franz', B + ' 1'],
            ['Müller Man...', B], ['Muster Ane...', B], ['Muster Sab...', B], ['Muster Vale...', B],
            ['Müsterli Bri...', B + ' 1'], ['Noser Burim', B + ' 1'], ['Noser Burim', B + ' 1'], ['Noser Burim', V],
            ['Rieser Lisa', B], ['Rollenati A...', B], ['Sägesser D...', B], ['Stoller Marti...', B], ['Tina Tura...', B]
        ];
        fill('auftragRows', auftraege.map(([name, struktur], i) => {
            const selected = name.startsWith('Sägesser');
            const bg = selected ? 'bg-[#0078d7] text-white' : i % 2 ? 'bg-[#fcfefc]' : 'bg-[#f0eacb]';
            return `<tr class="h-[19px] whitespace-nowrap ${bg}">
                <td class="p-0 pl-[5px] bg-[#c0c0c0] border-r border-b border-[#606060]">${selected ? icon('marker', 'w-1.5 h-2.5') : ''}</td>
                <td class="p-0 border-r border-b border-[#a0a0a0]"><input type="checkbox" checked aria-label="Aktiv" class="appearance-none block mx-auto size-[11px] border border-[#444] bg-white checked:after:block checked:after:w-1 checked:after:h-[7px] checked:after:ml-[3px] checked:after:border-r-2 checked:after:border-b-2 checked:after:border-[#555] checked:after:rotate-40 checked:after:content-['']"></td>
                <td class="p-0 pl-1 border-r border-b border-[#a0a0a0]">${name}</td>
                <td class="p-0 pl-1 border-r border-b border-[#a0a0a0]">${struktur}</td>
            </tr>`;
        }).join(''));

        fill('objektListe', [
            ['info', 'Abmachung'], ['check', 'Aufgabe'], ['box', 'Container1'], ['box', 'Container2'],
            ['doc', 'Dokument'], ['eval', 'Evaluation'], ['target', 'Zielvereinbarung']
        ].map(([ic, text], i) => `<li><button type="button" class="h-[22px] flex items-center">
            <span class="w-5 h-[21px] ml-[3px] mr-[5px] flex items-center justify-center ${i ? '' : 'border border-[#c8b850] border-r-[#f4f0d8] border-b-[#f4f0d8]'}">${icon(ic)}</span>
            <span class="text-black">${text}</span></button></li>`).join(''));

        fill('rangeButtons', [7, 1, 3, 6, 12].map(n =>
            `<button type="button" class="w-4 h-4 leading-[15px] flex justify-center border border-[#ddd] bg-white text-[13px] font-bold text-[#a80020]">${n}</button>`).join(''));

        // Zeitstrahl
        fill('zeitstrahl', [
            ['cal', '04.03.2019'], ['clip', '22.05.2019'], ['clip', '27.05.2019'], ['clip', '27.05.2019'],
            ['clip', '03.06.2019'], ['clip', '03.06.2019'], ['clip', '04.06.2019'], ['cal', '06.06.2019'],
            ['clip', '15.01.2021'], ['cal', '15.01.2021'], ['cal', '15.01.2021'], ['news', '01.04.2022']
        ].map(([ic, datum], i) => `<li class="w-[98px] flex flex-col items-center text-[#a80020]">${icon(ic)}
            <span class="h-4 mt-0.5 px-0.5 text-black ${i === 9 ? 'bg-[#f0f0f0]' : ''}">${datum}</span></li>`).join(''));

        // Ereignisse
        fill('ereignisHead', ['', 'Icon', 'Bezeichnung', 'Ereignisart', 'Ereignisdatum', 'Zeit', 'Partner / Adresse', 'Benutzergruppen', 'Erledigt', 'Erstellt am', 'Erstellt durch'].map(h => {
            const sort = h === 'Ereignisdatum' || h === 'Zeit';
            return `<th class="p-0 pl-[5px] font-normal whitespace-nowrap border-r border-b border-[#606060]"><span class="flex items-center justify-between pr-1.5">${h}${sort ? icon('tri', 'w-2 h-1 text-[#909090]') : ''}</span></th>`;
        }).join(''));
        fill('ereignisRows', [
            ['news', 'Freizeit', 'Freizeit', '01.04.2022', '11:47', '21.04.2022'],
            ['', 'Test.docx', 'Aufgabe', '15.01.2021', '14:42', '15.01.2021'],
            ['', 'Nachhilfe', 'Nachhilfe', '15.01.2021', '13:56', '15.01.2021'],
            ['clip', 'Meeting', 'E-Mail', '15.01.2021', '13:40', '15.01.2021'],
            ['', '', '', '', '', ''],
            ['clip', '', '', '', '', '']
        ].map(([ic, bez, art, datum, zeit, erstellt], i) => {
            const bg = i === 2 ? 'bg-[#0078d7] text-white' : i % 2 ? 'bg-[#fcfefc]' : 'bg-[#f0eacb]';
            const td = t => `<td class="p-0 pl-1 border-r border-b border-[#a0a0a0]">${t}</td>`;
            return `<tr class="h-[19px] whitespace-nowrap ${bg}">
                <td class="p-0 pl-[5px] bg-[#c0c0c0] border-r border-b border-[#606060]">${i === 2 ? icon('marker', 'w-1.5 h-2.5') : ''}</td>
                <td class="p-0 pl-px border-r border-b border-[#a0a0a0] text-[#a80020]">${ic ? icon(ic) : ''}</td>
                ${td(bez)}${td(art)}${td(datum)}${td(zeit)}${td(bez && 'Sägesser Doris')}${td('')}
                <td class="p-0 border-r border-b border-[#a0a0a0]"><input type="checkbox" aria-label="Erledigt" class="appearance-none block mx-auto size-[11px] border border-[#444] bg-white"></td>
                ${td(erstellt)}${td(bez && 'Admin Admin')}
            </tr>`;
        }).join(''));

        // Funktionslisten rechts
        const funktion = ([ic, text, disabled]) => `<li><button type="button" ${disabled ? 'disabled' : ''} class="h-[22px] flex items-center pl-[5px] gap-[7px] ${disabled ? 'text-[#888]' : ''}">
            ${icon(ic, disabled ? 'size-4 grayscale brightness-90' : 'size-4')}<span class="${disabled ? 'text-[#cdb956] [text-shadow:1px_1px_0_#f6f2dc]' : 'text-black'}">${text}</span></button></li>`;
        fill('ereignisFunktionen', [
            ['plus', 'Neu'], ['pencil', 'Bearbeiten'], ['trash', 'Löschen'], ['print', 'Drucken'],
            ['row', 'Quickview Einzel'], ['rows', 'Quickview Alle'], ['copy', 'Kopieren'], ['led', 'Leistung']
        ].map(funktion).join(''));
        fill('notizFunktionen', [['disk', 'Speichern'], ['box', 'Container1 ...'], ['box', 'Container2 ...']].map(funktion).join(''));
        fill('abmachungFunktionen', [
            ['plus', 'Neu'], ['pencil', 'Bearbeiten', true], ['trash', 'Löschen', true], ['box', 'Container1 ...', true],
            ['box', 'Container2 ...', true], ['print', 'Drucken', true], ['mail', 'Message senden', true]
        ].map(funktion).join(''));

        // Dialog
        const dialogItem = ([ic, text, active]) => `<li><button type="button" class="h-[22px] flex items-center">
            <span class="w-5 h-[21px] ml-[3px] mr-1 flex items-center justify-center ${active ? 'border border-[#5aa8f0] border-r-[#d0e8ff] border-b-[#d0e8ff]' : ''}">${icon(ic)}</span>
            <span class="text-black">${text}</span></button></li>`;
        fill('dialogNav', [['tray', 'Leistung', true], ['chat', 'Klassifikation'], ['lock', 'Berechtigungen']].map(dialogItem).join(''));
        fill('dialogFunktionen', [['trash', 'Löschen'], ['trash', 'Löschen 0-er Werte'], ['gear', 'Farbeinstellungen']].map(dialogItem).join(''));

        fill('leistungHead', ['Bezeichnung', 'Leistungsart', 'Leistung von', 'Leistung bis', 'Abrechnungsperiode', 'Anzahl', 'Leistungstyp', 'Tarif', 'Tarif / Ansatz'].map(h =>
            `<th class="p-0 pl-[5px] font-normal border-r border-b border-[#808890]">${h}</th>`).join(''));
        fill('leistungRow', ['Nachhilfestunde:  Sägesser Doris:', 'Nachhilfestunde', '15.01.2021', '15.01.2021', '', '1.00', 'Stunden', '&lt;keine Angabe&gt;', ''].map((t, i) =>
            `<td class="p-0 pl-1 pr-[5px] border-r border-b border-[#a0a0a0] ${i === 5 ? 'text-right' : ''}">${t}</td>`).join(''));

        fill('bezuege', [
            ['Klient*in', ''], ['Dossier', 'Sägesser Doris'], ['Mitarbeiter*in', 'Admin Admin'],
            ['Journal', 'Sägesser Doris Beratungsdokumentation'], ['Adresse', ''], ['Anfrage/Intake', ''], ['Schuldenhotline', '']
        ].map(([label, wert], i) => `<div class="mt-0.5 flex items-center">
            <label for="bezug${i}" class="w-[194px] pt-0.5">${label}</label>
            <div class="relative flex-1">
                <select id="bezug${i}" class="appearance-none block w-full h-5 pl-[3px] border border-black text-[#400040]"><option>${wert}</option></select>
                <svg class="absolute right-1 top-2 w-1.5 h-[3px] text-[#a8b4c4]"><use href="#i-tri"/></svg>
            </div>
        </div>`).join(''));
    </script>
</body>
</html>
